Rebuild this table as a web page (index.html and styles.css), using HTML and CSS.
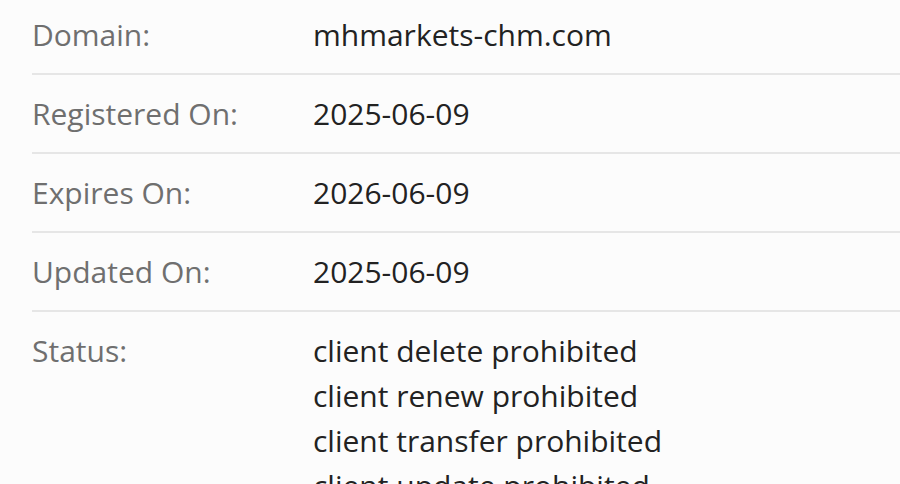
FILE: index.html
```html
<!DOCTYPE html>
<html>
<head>
<meta charset="utf-8">
<link rel="stylesheet" href="styles.css">
</head>
<body>
<div class="whois">
  <div class="row">
    <div class="label">Domain:</div>
    <div class="value">mhmarkets-chm.com</div>
  </div>
  <div class="row">
    <div class="label">Registered On:</div>
    <div class="value">2025-06-09</div>
  </div>
  <div class="row">
    <div class="label">Expires On:</div>
    <div class="value">2026-06-09</div>
  </div>
  <div class="row">
    <div class="label">Updated On:</div>
    <div class="value">2025-06-09</div>
  </div>
  <div class="row">
    <div class="label">Status:</div>
    <div class="value">
      <div>client delete prohibited</div>
      <div>client renew prohibited</div>
      <div>client transfer prohibited</div>
      <div>client update prohibited</div>
    </div>
  </div>
</div>
</body>
</html>
```
FILE: styles.css
```css
html, body {
  margin: 0;
  padding: 0;
  background: #fcfcfc;
  overflow: hidden;
}
.whois {
  padding-left: 32px;
  margin-top: -4px;
  font-family: "Open Sans", "Noto Sans", sans-serif;
  font-size: 30px;
  line-height: 45px;
}
.row {
  display: flex;
  padding: 16px 0;
  border-bottom: 2px solid #e6e6e6;
}
.label {
  width: 281px;
  flex: none;
  color: #6f6f6f;
}
.value {
  color: #222222;
}
```
